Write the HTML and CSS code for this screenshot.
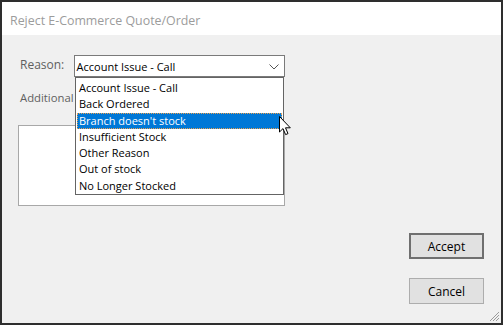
FILE: index.html
```html
<!DOCTYPE html>
<html>
<head>
<meta charset="utf-8">
<link rel="stylesheet" href="styles.css">
</head>
<body>
<div class="window">
  <div class="titlebar">Reject E-Commerce Quote/Order</div>
  <div class="client">
    <div class="form">
      <div class="row-reason">
        <span class="label">Reason:</span>
        <div class="combo">
          <span class="combo-text">Account Issue - Call</span>
          <svg class="chev" width="10" height="6" viewBox="0 0 10 6"><path d="M0.5 0.5 L5 5 L9.5 0.5" fill="none" stroke="#555" stroke-width="1"/></svg>
        </div>
      </div>
      <div class="label label-add">Additional Comments:</div>
      <div class="textbox"></div>
    </div>
    <div class="buttons">
      <button class="btn btn-default">Accept</button>
      <button class="btn">Cancel</button>
    </div>
    <ul class="dropdown">
      <li>Account Issue - Call</li>
      <li>Back Ordered</li>
      <li class="sel">Branch doesn't stock</li>
      <li>Insufficient Stock</li>
      <li>Other Reason</li>
      <li>Out of stock</li>
      <li>No Longer Stocked</li>
    </ul>
    <svg class="cursor" width="13" height="20" viewBox="0 0 13 20"><path d="M0.5 0.5 L0.5 16 L4 12.6 L6.6 18.6 L9 17.6 L6.5 11.8 L11.3 11.8 Z" fill="#fff" stroke="#000" stroke-width="1" stroke-linejoin="miter"/></svg>
    <svg class="grip" width="12" height="12" viewBox="0 0 12 12"><path d="M11 2 L2 11 M11 5 L5 11 M11 8 L8 11" stroke="#9a9a9a" stroke-width="1"/></svg>
  </div>
</div>
</body>
</html>
```
FILE: styles.css
```css
html, body { margin: 0; padding: 0; background: #fff; }
body { width: 504px; height: 327px; overflow: hidden; font-family: "Open Sans", "Noto Sans", sans-serif; font-size: 12px; }
.window {
  width: 499px; height: 321px;
  border: 2px solid #2e2e2e;
  background: #f0f0f0;
  display: flex; flex-direction: column;
}
.titlebar {
  height: 33px; background: #fff; color: #9c9c9c;
  font-size: 12.4px; line-height: 33px; padding-left: 8px; box-sizing: border-box; padding-top: 2px;
}
.client { flex: 1; position: relative; display: flex; padding: 20px 17px 19px 16px; }
.form { display: flex; flex-direction: column; width: 267px; }
.row-reason { display: flex; align-items: flex-start; padding-left: 2px; }
.label { color: #5f5f5f; }
.row-reason .label { width: 55px; margin-top: 1px; }
.combo {
  width: 208px; height: 20px; border: 1px solid #7a7a7a; background: #fff;
  display: flex; align-items: center; justify-content: space-between; padding: 0 5px 0 2px;
  box-sizing: content-box;
}
.combo-text { color: #000; font-size: 11px; }
.chev { margin-top: 1px; }
.label-add { margin: 13px 0 0 2px; font-size: 11.3px; white-space: nowrap; }
.textbox { margin-top: 20px; height: 79px; border: 1px solid #a8a8a8; background: #fff; }
.buttons { margin-left: auto; display: flex; flex-direction: column; justify-content: flex-end; gap: 19px; }
.btn {
  width: 75px; height: 26px; background: #e1e1e1; border: 1px solid #adadad;
  font-family: inherit; font-size: 12px; color: #000; padding: 0; margin: 0;
}
.btn-default { border: 2px solid #6f6f6f; }
.dropdown {
  position: absolute; left: 73px; top: 42px; width: 207px;
  margin: 0; padding: 2px 0 0; list-style: none;
  background: #fff; border: 1px solid #646464; font-size: 11px;
}
.dropdown li { height: 16.3px; line-height: 16.3px; padding-left: 2px; margin: 0 1px; color: #000; }
.dropdown li.sel { background: #0078d7; color: #fff; outline: 1px dotted #e8a050; outline-offset: -1px; }
.cursor { position: absolute; left: 277px; top: 81px; }
.grip { position: absolute; right: 1px; bottom: 1px; }
```
